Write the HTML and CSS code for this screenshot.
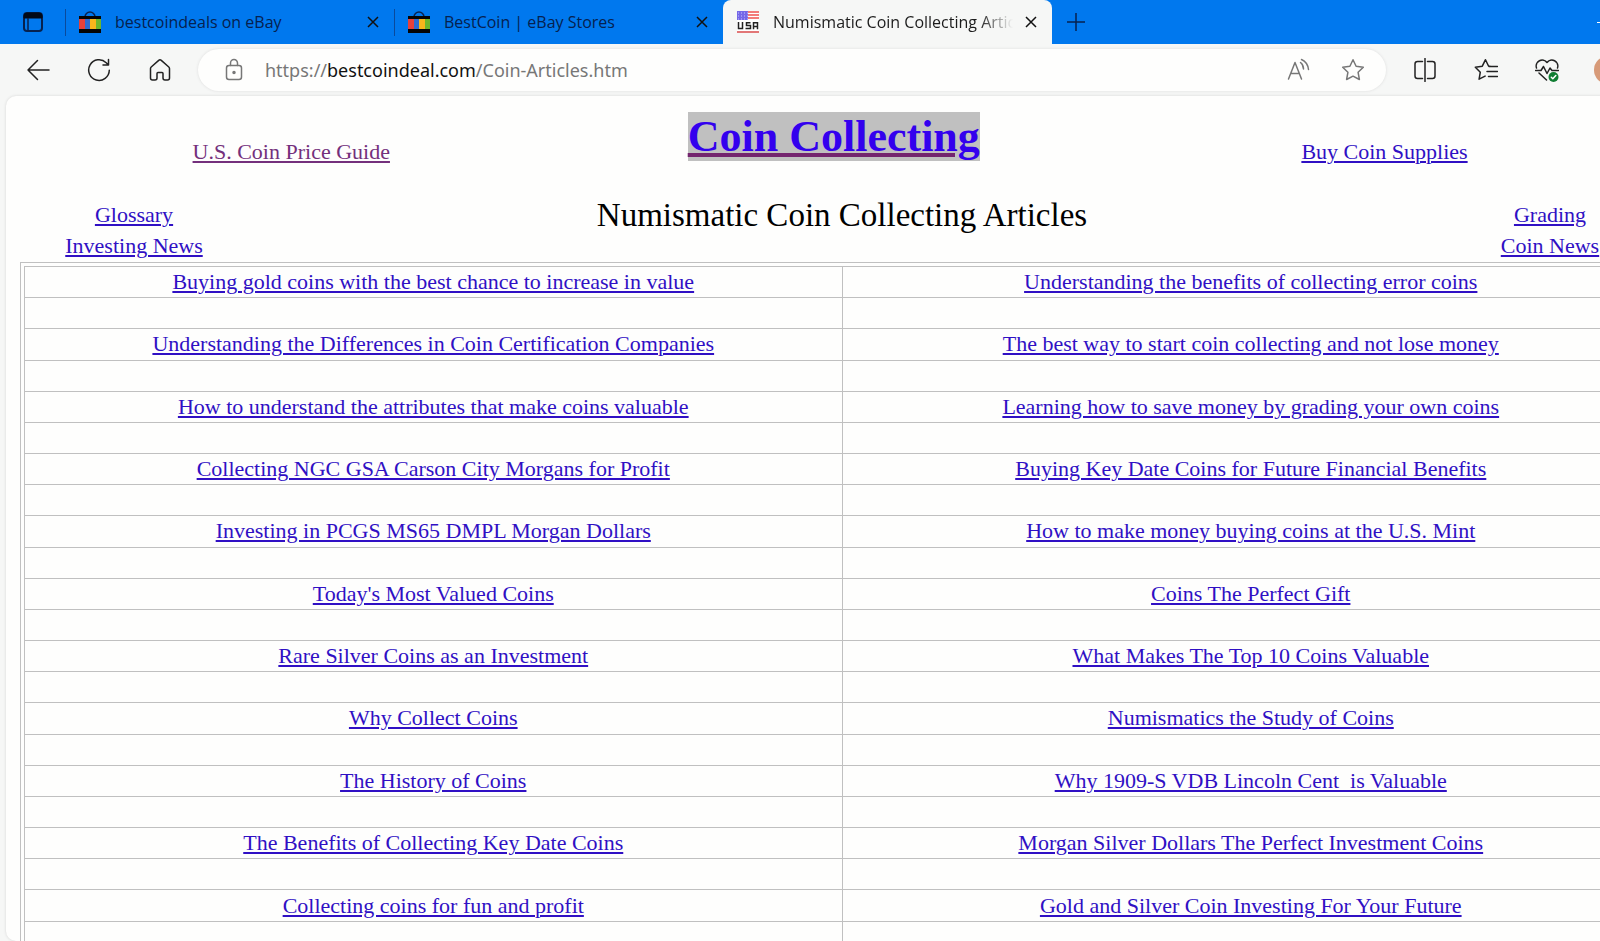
FILE: index.html
```html
<!DOCTYPE html>
<html lang="en">
<head>
    <meta charset="UTF-8">
    <meta name="viewport" content="width=device-width, initial-scale=1.0">
    <title>Numismatic Coin Collecting Articles</title>
    <link rel="stylesheet" href="styles.css">
</head>
<body>

<div class="browser">

    <!-- Tab strip -->
    <div class="tabs">
        <button class="tab-menu" aria-label="Tab actions">
            <svg width="22" height="22" viewBox="0 0 22 22"><rect x="2" y="2" width="18" height="18" rx="3" fill="none" stroke="#06214f" stroke-width="2"/><path d="M2 7V5a3 3 0 0 1 3-3h12a3 3 0 0 1 3 3v2z" fill="#020a18" stroke="#020a18"/><path d="M6 7v13" stroke="#06214f" stroke-width="1.5"/></svg>
        </button>
        <div class="tab">
            <svg class="favicon" viewBox="0 0 22 22"><path d="M6 6a5 5 0 0 1 10 0" fill="none" stroke="#0a2350" stroke-width="1.5"/><path d="M0 8h6v11H0z" fill="#e8413a"/><path d="M6 8h5v11H6z" fill="#2d6bd0"/><path d="M11 8h6v11h-6z" fill="#f7b51c"/><path d="M17 8h5v11h-5z" fill="#6cb52d"/><path d="M0 5h22v3H0zM0 18h22v4H0z" fill="#050505"/></svg>
            <span class="tab-title">bestcoindeals on eBay</span>
            <button class="close" aria-label="Close tab"><svg width="12" height="12" viewBox="0 0 12 12"><path d="M1 1l10 10M11 1L1 11"/></svg></button>
        </div>
        <div class="tab">
            <svg class="favicon" viewBox="0 0 22 22"><path d="M6 6a5 5 0 0 1 10 0" fill="none" stroke="#0a2350" stroke-width="1.5"/><path d="M0 8h6v11H0z" fill="#e8413a"/><path d="M6 8h5v11H6z" fill="#2d6bd0"/><path d="M11 8h6v11h-6z" fill="#f7b51c"/><path d="M17 8h5v11h-5z" fill="#6cb52d"/><path d="M0 5h22v3H0zM0 18h22v4H0z" fill="#050505"/></svg>
            <span class="tab-title">BestCoin | eBay Stores</span>
            <button class="close" aria-label="Close tab"><svg width="12" height="12" viewBox="0 0 12 12"><path d="M1 1l10 10M11 1L1 11"/></svg></button>
        </div>
        <div class="tab active">
            <svg class="favicon" viewBox="0 0 22 22"><path d="M0 0h22v22H0z" fill="#fff"/><path d="M0 1h22M0 4h22M0 7h22" stroke="#f0524f" stroke-width="1.5"/><path d="M0 0h11v9H0z" fill="#7468e8"/><path d="M1 2h10M1 5h10M1 8h10" stroke="#c9c4fa" stroke-dasharray="1 2"/><path d="M1.500 11v6.500h4V11M13.500 11.800h-4v2.700h4v3h-5M16.500 18.300v-6.500h4v6.500M16.500 15.500h4" fill="none" stroke="#222" stroke-width="1.500"/><path d="M0 21h22" stroke="#d94a4a" stroke-width="1.500"/></svg>
            <span class="tab-title">Numismatic Coin Collecting Articles</span>
            <button class="close" aria-label="Close tab"><svg width="12" height="12" viewBox="0 0 12 12"><path d="M1 1l10 10M11 1L1 11"/></svg></button>
        </div>
        <button class="new-tab" aria-label="New tab"><svg width="20" height="20" viewBox="0 0 20 20"><path d="M10 1v18M1 10h18" stroke="#06214f" stroke-width="1.5"/></svg></button>
        <button class="minimize" aria-label="Minimize"><svg width="14" height="14" viewBox="0 0 14 14"><path d="M0 7.500h14" stroke="#fff"/></svg></button>
    </div>

    <!-- Toolbar -->
    <div class="toolbar">
        <button class="tool" aria-label="Back"><svg viewBox="0 0 24 24"><path d="M23 12H2M11.500 2.500L2 12l9.500 9.500"/></svg></button>
        <button class="tool" aria-label="Refresh"><svg viewBox="0 0 24 24"><path d="M22.300 12.300A10.300 10.300 0 1 1 19.200 4.700L21.500 7M21.500 1.500V7H16"/></svg></button>
        <button class="tool" aria-label="Home"><svg viewBox="0 0 24 24"><path d="M2.500 10.500v9.500a2 2 0 0 0 2 2H7a2 2 0 0 0 2-2v-4.500a1 1 0 0 1 1-1h4a1 1 0 0 1 1 1V20a2 2 0 0 0 2 2h2.500a2 2 0 0 0 2-2v-9.500a2 2 0 0 0-.700-1.500l-7.500-6.600a2 2 0 0 0-2.600 0L3.200 9a2 2 0 0 0-.700 1.500z"/></svg></button>
        <div class="address">
            <svg viewBox="0 0 24 24"><rect x="4.500" y="7.500" width="15" height="14" rx="2.500"/><path d="M8.500 7.500V5a3.500 3.500 0 0 1 7 0v2.500"/><circle cx="12" cy="14.500" r="1" fill="#777"/></svg>
            <span class="url">https://<b>bestcoindeal.com</b>/Coin-Articles.htm</span>
            <button class="in-bar" aria-label="Read aloud"><svg viewBox="0 0 24 24"><path d="M1.500 21L8 4.500 14.500 21M3.800 15.500h8.500M13.500 4.500c2 1.500 3 3.500 3 6.500M14.500 1.500c4.500 2 6.500 5.500 7 10"/></svg></button>
            <button class="in-bar" aria-label="Add to favorites"><svg viewBox="0 0 24 24"><path d="M12 1.800l3.100 6.500 7.200 1-5.200 5 1.300 7.200L12 18.200l-6.400 3.300 1.300-7.200-5.200-5 7.200-1z"/></svg></button>
        </div>
        <button class="tool" aria-label="Split screen"><svg viewBox="0 0 24 24"><path d="M9.500 3.500H4.500a2.500 2.500 0 0 0-2.500 2.500v12a2.500 2.500 0 0 0 2.500 2.500h5M14.500 3.500h5A2.500 2.500 0 0 1 22 6v12a2.500 2.500 0 0 1-2.500 2.500h-5M12 .500v23"/></svg></button>
        <button class="tool" aria-label="Favorites"><svg viewBox="0 0 24 24"><path d="M16 8.300L14.500 8 11.500 1.700 8.300 8.200l-7 1 5 5-1.200 7 6-3.100M15 8.500h8.500M13 13.500h10.500M14.500 18.500h9"/></svg></button>
        <button class="tool" aria-label="Browser essentials"><svg viewBox="0 0 24 24"><path d="M1.500 10a6 6 0 0 1 10.500-5.500A6 6 0 0 1 22.500 10M.500 12.500h5.500l2.500-4 3.500 7 3-5.500 2 2.500h6.500M4 15l7.500 7"/><circle cx="18.500" cy="19" r="5" fill="#0f7d32" stroke="none"/><path d="M16.300 19.200l1.500 1.500 3-3.200" stroke="#fff"/></svg></button>
        <button class="tool" aria-label="Profile"><span class="avatar"></span></button>
    </div>

    <!-- Page -->
    <main class="page">
        <div class="top-row">
            <a class="visited" href="#">U.S. Coin Price Guide</a>
            <h1><a class="selected" href="#">Coin Collecting</a></h1>
            <a href="#">Buy Coin Supplies</a>
        </div>
        <div class="title-row">
            <nav>
                <a href="#">Glossary</a>
                <a href="#">Investing News</a>
            </nav>
            <h2>Numismatic Coin Collecting Articles</h2>
            <nav>
                <a href="#">Grading</a>
                <a href="#">Coin News</a>
            </nav>
        </div>
        <div class="frame">
            <table>
                <tr><td><a href="#">Buying gold coins with the best chance to increase in value</a></td><td><a href="#">Understanding the benefits of collecting error coins</a></td></tr>
                <tr><td></td><td></td></tr>
                <tr><td><a href="#">Understanding the Differences in Coin Certification Companies</a></td><td><a href="#">The best way to start coin collecting and not lose money</a></td></tr>
                <tr><td></td><td></td></tr>
                <tr><td><a href="#">How to understand the attributes that make coins valuable</a></td><td><a href="#">Learning how to save money by grading your own coins</a></td></tr>
                <tr><td></td><td></td></tr>
                <tr><td><a href="#">Collecting NGC GSA Carson City Morgans for Profit</a></td><td><a href="#">Buying Key Date Coins for Future Financial Benefits</a></td></tr>
                <tr><td></td><td></td></tr>
                <tr><td><a href="#">Investing in PCGS MS65 DMPL Morgan Dollars</a></td><td><a href="#">How to make money buying coins at the U.S. Mint</a></td></tr>
                <tr><td></td><td></td></tr>
                <tr><td><a href="#">Today's Most Valued Coins</a></td><td><a href="#">Coins The Perfect Gift</a></td></tr>
                <tr><td></td><td></td></tr>
                <tr><td><a href="#">Rare Silver Coins as an Investment</a></td><td><a href="#">What Makes The Top 10 Coins Valuable</a></td></tr>
                <tr><td></td><td></td></tr>
                <tr><td><a href="#">Why Collect Coins</a></td><td><a href="#">Numismatics the Study of Coins</a></td></tr>
                <tr><td></td><td></td></tr>
                <tr><td><a href="#">The History of Coins</a></td><td><a href="#">Why 1909-S VDB Lincoln Cent&nbsp; is Valuable</a></td></tr>
                <tr><td></td><td></td></tr>
                <tr><td><a href="#">The Benefits of Collecting Key Date Coins</a></td><td><a href="#">Morgan Silver Dollars The Perfect Investment Coins</a></td></tr>
                <tr><td></td><td></td></tr>
                <tr><td><a href="#">Collecting coins for fun and profit</a></td><td><a href="#">Gold and Silver Coin Investing For Your Future</a></td></tr>
                <tr><td></td><td></td></tr>
            </table>
        </div>
    </main>

</div>

</body>
</html>
```

FILE: styles.css
```css
* {
    margin: 0;
    padding: 0;
    box-sizing: border-box;
}

body {
    overflow: hidden;
    background: #f6f7f6;
    font-family: "Liberation Serif", "Times New Roman", serif;
}

button {
    display: flex;
    align-items: center;
    justify-content: center;
    border: none;
    background: none;
}

/* The window runs past the right edge of the screen */
.browser {
    width: 104vw;
    height: 100vh;
    display: flex;
    flex-direction: column;
}

/* Tab strip */
.tabs {
    flex: none;
    display: flex;
    height: 44px;
    background: #0078ee;
    font-family: "Open Sans", "Noto Sans", sans-serif;
    font-size: 16px;
}

.tab-menu {
    width: 65px;
}

.tab {
    display: flex;
    align-items: center;
    width: 329px;
    padding: 0 7px 0 14px;
    color: #06214f;
    background: linear-gradient(#0a4a9c, #0a4a9c) 0 50% / 1px 27px no-repeat;
}

.tab.active {
    background: #f6f7f6;
    border-radius: 8px 8px 0 0;
    color: #1c1c1c;
}

.favicon {
    flex: none;
    width: 22px;
    height: 22px;
    margin-right: 14px;
}

.tab-title {
    flex: 1;
    overflow: hidden;
    white-space: nowrap;
}

.active .tab-title {
    -webkit-mask-image: linear-gradient(90deg, #000 86%, transparent);
    mask-image: linear-gradient(90deg, #000 86%, transparent);
}

.close {
    width: 28px;
    height: 28px;
    margin-left: 4px;
}

.close svg {
    stroke: #111;
    stroke-width: 1.5;
}

.new-tab {
    width: 48px;
}

.minimize {
    width: 60px;
    margin-left: auto;
    margin-right: 30px;
}

/* Toolbar */
.toolbar {
    flex: none;
    display: flex;
    align-items: center;
    height: 52px;
    padding: 0 26px 0 7px;
}

.tool {
    width: 61px;
    height: 40px;
}

.toolbar svg {
    width: 24px;
    height: 24px;
    fill: none;
    stroke: #222;
    stroke-width: 1.5;
    stroke-linecap: round;
    stroke-linejoin: round;
}

.toolbar .address svg {
    stroke: #777;
}

.address {
    flex: 1;
    display: flex;
    align-items: center;
    height: 42px;
    margin: 0 8px;
    padding: 0 6px 0 24px;
    border-radius: 21px;
    background: #fefefd;
    box-shadow: 0 0 3px #dcdcdc;
}

.url {
    flex: 1;
    margin-left: 19px;
    font-family: "Noto Sans", "Open Sans", sans-serif;
    font-size: 18px;
    color: #777;
}

.url b {
    font-weight: normal;
    color: #111;
}

.in-bar {
    width: 54px;
    height: 36px;
}

.avatar {
    width: 28px;
    height: 28px;
    border-radius: 50%;
    background: #d79a78;
}

/* Page */
.page {
    flex: 1;
    overflow: hidden;
    margin-left: 6px;
    padding: 17px 0 0 14px;
    border-radius: 10px;
    background: #fefefd;
    box-shadow: 0 0 3px #d4d4d4;
    font-size: 22px;
    line-height: 31px;
    text-align: center;
}

a {
    color: #3010c4;
    text-decoration-thickness: 2px;
    text-underline-offset: 2px;
}

.visited {
    color: #74307c;
}

.top-row {
    display: grid;
    grid-template-columns: 33% 33% 34%;
    align-items: end;
    height: 54px;
}

.top-row h1 {
    height: 54px;
    font-size: 44px;
    line-height: 48px;
}

.selected {
    background: #c0c0c0;
    color: #3300ee;
    text-decoration-color: #74256e;
    text-decoration-thickness: 4px;
}

.title-row {
    display: flex;
    justify-content: space-between;
    margin-top: 32px;
    padding: 0 4px;
}

.title-row nav {
    display: flex;
    flex-direction: column;
    align-items: center;
    width: 220px;
}

.title-row h2 {
    font-size: 33px;
    font-weight: normal;
    line-height: 33px;
}

.frame {
    margin-top: 1px;
    padding: 3px;
    border: 1px solid #c0c0c0;
}

table {
    width: 100%;
    height: 687px;
    table-layout: fixed;
    border-collapse: collapse;
}

td {
    height: 31px;
    border: 1px solid #c0c0c0;
    line-height: 30px;
}
```
